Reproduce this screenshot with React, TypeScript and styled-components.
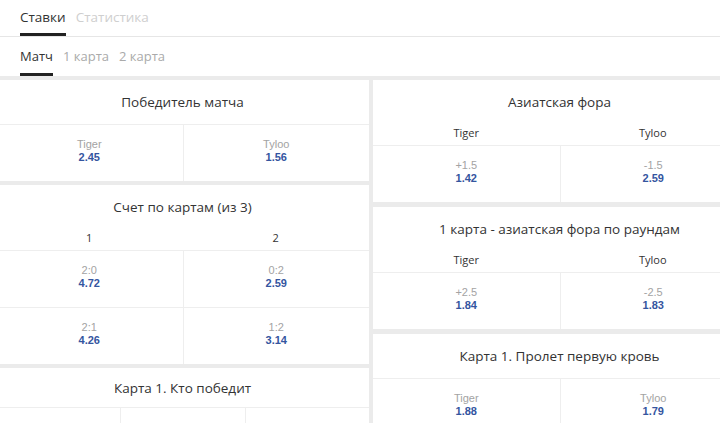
import React from "react";
import styled, { createGlobalStyle } from "styled-components";

const Global = createGlobalStyle`
  html, body { margin: 0; padding: 0; background: #fff; overflow: hidden; }
  body { font-family: "Open Sans", "Noto Sans", sans-serif; color: #333; }
  * { box-sizing: border-box; }
`;

type Cell = { label?: string; odd?: string };
type Market = { title: string; headers?: string[]; rows: Cell[][]; titleHeight?: number };

const left: Market[] = [
  { title: "Победитель матча", rows: [[{ label: "Tiger", odd: "2.45" }, { label: "Tyloo", odd: "1.56" }]] },
  {
    title: "Счет по картам (из 3)",
    headers: ["1", "2"],
    rows: [
      [{ label: "2:0", odd: "4.72" }, { label: "0:2", odd: "2.59" }],
      [{ label: "2:1", odd: "4.26" }, { label: "1:2", odd: "3.14" }],
    ],
  },
  { title: "Карта 1. Кто победит", titleHeight: 39, rows: [[{}, {}, {}]] },
];

const right: Market[] = [
  {
    title: "Азиатская фора",
    headers: ["Tiger", "Tyloo"],
    rows: [[{ label: "+1.5", odd: "1.42" }, { label: "-1.5", odd: "2.59" }]],
  },
  {
    title: "1 карта - азиатская фора по раундам",
    headers: ["Tiger", "Tyloo"],
    rows: [[{ label: "+2.5", odd: "1.84" }, { label: "-2.5", odd: "1.83" }]],
  },
  { title: "Карта 1. Пролет первую кровь", rows: [[{ label: "Tiger", odd: "1.88" }, { label: "Tyloo", odd: "1.79" }]] },
];

const Page = styled.div`
  width: 720px;
  height: 423px;
  overflow: hidden;
  display: flex;
  flex-direction: column;
`;

const TabBar = styled.div`
  display: flex;
  gap: 10px;
  padding-left: 20px;
  height: 37px;
  border-bottom: 1px solid #e6e6e6;
  flex-shrink: 0;
`;

const SubBar = styled.div`
  display: flex;
  gap: 10px;
  padding-left: 20px;
  height: 39px;
  flex-shrink: 0;
`;

const Tab = styled.div<{ $active?: boolean; $muted?: string; $size: number }>`
  display: flex;
  align-items: center;
  padding-top: 1px;
  font-size: ${(p) => p.$size}px;
  color: ${(p) => (p.$active ? "#333" : p.$muted || "#bbb")};
  border-bottom: 3px solid ${(p) => (p.$active ? "#222" : "transparent")};
`;

const Board = styled.div`
  flex: 1;
  background: #ebebeb;
  padding-top: 4px;
  margin-left: -4px;
  display: grid;
  grid-template-columns: 373px 373px;
  gap: 4px;
  align-items: start;
`;

const Column = styled.div<{ $gap: number }>`
  display: flex;
  flex-direction: column;
  gap: ${(p) => p.$gap}px;
`;

const Card = styled.div`
  background: #fff;
`;

const Title = styled.div<{ $h: number; $withHeader?: boolean }>`
  height: ${(p) => p.$h}px;
  display: flex;
  justify-content: center;
  align-items: ${(p) => (p.$withHeader ? "flex-start" : "center")};
  padding-top: ${(p) => (p.$withHeader ? 13 : 0)}px;
  font-size: 13.5px;
  color: #333;
  white-space: nowrap;
`;

const HeaderRow = styled.div`
  display: grid;
  grid-template-columns: 1fr 1fr;
  height: 25px;
`;

const HeaderCell = styled.div`
  display: flex;
  align-items: center;
  justify-content: center;
  font-size: 11px;
  color: #333;
`;

const OddsRow = styled.div<{ $cols: number }>`
  display: grid;
  grid-template-columns: repeat(${(p) => p.$cols}, 1fr);
  height: 57px;
  border-top: 1px solid #eee;
`;

const OddsCell = styled.div`
  display: flex;
  flex-direction: column;
  align-items: center;
  justify-content: center;
  border-left: 1px solid #eee;
  font-family: "Liberation Sans", Arial, sans-serif;
  font-size: 11px;
  line-height: 13px;
  padding-bottom: 5px;
  &:first-child { border-left: none; }
`;

const Label = styled.span`
  color: #a3a3a3;
`;

const Odd = styled.span`
  color: #34559f;
  font-weight: bold;
`;

function MarketCard({ m }: { m: Market }) {
  const hasHeader = !!m.headers;
  const h = m.titleHeight ?? (hasHeader ? 40 : 44);
  return (
    <Card>
      <Title $h={h} $withHeader={hasHeader}>{m.title}</Title>
      {m.headers && (
        <HeaderRow>
          {m.headers.map((x, i) => (
            <HeaderCell key={i}>{x}</HeaderCell>
          ))}
        </HeaderRow>
      )}
      {m.rows.map((row, ri) => (
        <OddsRow key={ri} $cols={row.length}>
          {row.map((c, ci) => (
            <OddsCell key={ci}>
              {c.label && <Label>{c.label}</Label>}
              {c.odd && <Odd>{c.odd}</Odd>}
            </OddsCell>
          ))}
        </OddsRow>
      ))}
    </Card>
  );
}

export default function App() {
  return (
    <Page>
      <Global />
      <TabBar>
        <Tab $active $size={13.5}>Ставки</Tab>
        <Tab $muted="#cfcfcf" $size={13.5}>Статистика</Tab>
      </TabBar>
      <SubBar>
        <Tab $active $size={13}>Матч</Tab>
        <Tab $muted="#aaa" $size={13}>1 карта</Tab>
        <Tab $muted="#aaa" $size={13}>2 карта</Tab>
      </SubBar>
      <Board>
        <Column $gap={4}>
          {left.map((m, i) => (
            <MarketCard key={i} m={m} />
          ))}
        </Column>
        <Column $gap={5}>
          {right.map((m, i) => (
            <MarketCard key={i} m={m} />
          ))}
        </Column>
      </Board>
    </Page>
  );
}
